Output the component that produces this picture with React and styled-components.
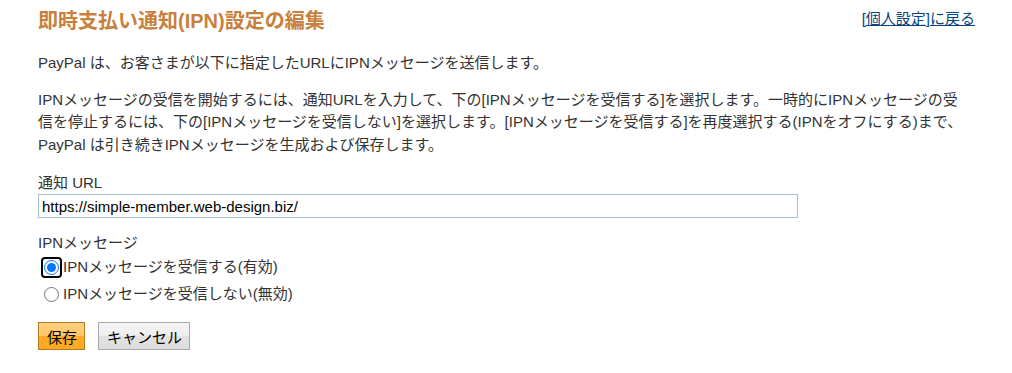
import React from "react";
import styled, { createGlobalStyle } from "styled-components";

const Global = createGlobalStyle`
  html, body { margin: 0; padding: 0; background: #fff; }
  body { font-family: "Liberation Sans", Arial, "Noto Sans CJK JP", sans-serif; color: #333; }
`;

const Page = styled.div`
  width: 937px;
  padding: 9px 0 0 38px;
  font-size: 15px;
  line-height: 1.5;
`;

const Header = styled.div`
  display: flex;
  justify-content: space-between;
  align-items: flex-start;
`;

const Title = styled.h1`
  margin: 0;
  font-size: 20px;
  font-weight: bold;
  line-height: 24px;
  color: #c8803c;
`;

const BackLinks = styled.div`
  font-size: 15px;
  line-height: 20px;
  color: #084482;
  a { color: #084482; text-decoration: underline; }
`;

const Para = styled.p`
  width: 928px;
  margin: ${(p) => p.$top || 0}px 0 0;
`;

const Field = styled.div`
  margin-top: ${(p) => p.$top}px;
  display: flex;
  flex-direction: column;
`;

const Label = styled.label`
  font-size: 15px;
  line-height: 22px;
`;

const UrlInput = styled.input`
  box-sizing: border-box;
  width: 760px;
  height: 24px;
  margin: 0;
  padding: 0 3px;
  border: 1px solid #a9bcd3;
  font-family: "Liberation Sans", Arial, sans-serif;
  font-size: 15px;
  color: #000;
  outline: none;
`;

const RadioRow = styled.label`
  display: flex;
  align-items: center;
  height: 27px;
  font-size: 15px;
`;

const Radio = styled.input`
  width: 15px;
  height: 15px;
  margin: 0 4px 0 6px;
  accent-color: #0075ff;
  outline: none;
`;

const FocusRing = styled.span`
  display: inline-flex;
  align-items: center;
  justify-content: center;
  box-sizing: border-box;
  width: 21px;
  height: 21px;
  margin: 0 1px 0 3px;
  border: 2px solid #000;
  border-radius: 4px;
  input { margin: 0; width: 15px; height: 15px; accent-color: #0075ff; outline: none; }
`;

const Buttons = styled.div`
  display: flex;
  gap: 13px;
  margin-top: 14px;
`;

const Button = styled.button`
  box-sizing: border-box;
  height: 28px;
  padding: 0 7px 0 8px;
  font-family: "Liberation Sans", Arial, "Noto Sans CJK JP", sans-serif;
  font-size: 15px;
  color: #000;
  cursor: pointer;
  border: 1px solid ${(p) => (p.$primary ? "#b47a24" : "#a9a9a9")};
  background: ${(p) =>
    p.$primary
      ? "linear-gradient(#ffd083 0%, #ffc766 48%, #ffab26 52%, #ffa922 100%)"
      : "linear-gradient(#f5f5f5 0%, #eeeeee 48%, #e2e2e2 52%, #dedede 100%)"};
`;

export default function App() {
  return (
    <>
      <Global />
      <Page>
        <Header>
          <Title>即時支払い通知(IPN)設定の編集</Title>
          <BackLinks>
            [<a href="#">個人設定</a>]<a href="#">に戻る</a>
          </BackLinks>
        </Header>
        <Para $top={19}>PayPal は、お客さまが以下に指定したURLにIPNメッセージを送信します。</Para>
        <Para $top={14}>
          IPNメッセージの受信を開始するには、通知URLを入力して、下の[IPNメッセージを受信する]を選択します。一時的にIPNメッセージの受信を停止するには、下の[IPNメッセージを受信しない]を選択します。[IPNメッセージを受信する]を再度選択する(IPNをオフにする)まで、PayPal は引き続きIPNメッセージを生成および保存します。
        </Para>
        <Field $top={16}>
          <Label>通知 URL</Label>
          <UrlInput defaultValue="https://simple-member.web-design.biz/" />
        </Field>
        <Field $top={14}>
          <Label>IPNメッセージ</Label>
          <RadioRow>
            <FocusRing>
              <input type="radio" name="ipn" defaultChecked />
            </FocusRing>
            IPNメッセージを受信する(有効)
          </RadioRow>
          <RadioRow>
            <Radio type="radio" name="ipn" />
            IPNメッセージを受信しない(無効)
          </RadioRow>
        </Field>
        <Buttons>
          <Button $primary>保存</Button>
          <Button>キャンセル</Button>
        </Buttons>
      </Page>
    </>
  );
}
